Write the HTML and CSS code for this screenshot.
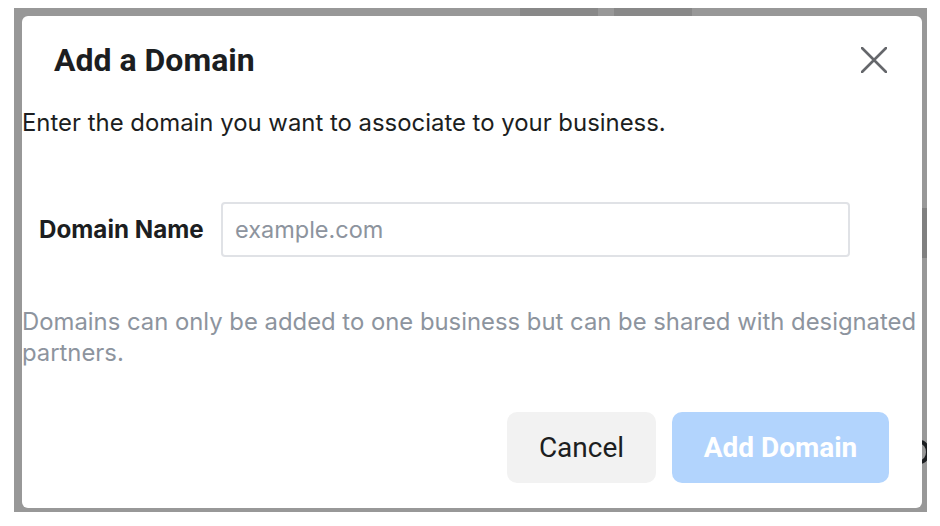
FILE: index.html
```html
<!DOCTYPE html>
<html lang="en">
<head>
  <meta charset="UTF-8" />
  <title>Add a Domain</title>
  <link rel="stylesheet" href="styles.css">
</head>
<body>

<div class="backdrop">
  <span class="under under-a"></span>
  <span class="under under-b"></span>
  <span class="under under-c"></span>
  <span class="peek"></span>

  <div class="dialog">
    <div class="dialog-header">
      <h2>Add a Domain</h2>
      <button class="btn-close" aria-label="Close">
        <svg width="26" height="26" viewBox="0 0 26 26">
          <path d="M1 1 L25 25 M25 1 L1 25" stroke="#65676b" stroke-width="2.6" stroke-linecap="round" fill="none"/>
        </svg>
      </button>
    </div>

    <p class="intro">Enter the domain you want to associate to your business.</p>

    <div class="field">
      <label for="domain">Domain Name</label>
      <input id="domain" type="text" placeholder="example.com">
    </div>

    <p class="hint">Domains can only be added to one business but can be shared with designated partners.</p>

    <div class="actions">
      <button class="btn-cancel">Cancel</button>
      <button class="btn-add" disabled>Add Domain</button>
    </div>
  </div>
</div>

</body>
</html>
```

FILE: styles.css
```css
body {
  margin: 0;
  background-color: white;
  font-family: Inter, "Liberation Sans", sans-serif;
  color: #1c1e21;
}

.backdrop {
  position: relative;
  overflow: hidden;
  margin: 8px 13px 0 14px;
  height: 504px;
  box-sizing: border-box;
  padding: 8px 5px 4px 8px;
  background-color: #989898;
}

/* bits of the page under the overlay */
.under {
  position: absolute;
  background-color: #888;
}

.under-a {
  left: 506px;
  top: 0;
  width: 78px;
  height: 8px;
}

.under-b {
  left: 600px;
  top: 0;
  width: 78px;
  height: 8px;
}

.under-c {
  right: 0;
  top: 200px;
  width: 5px;
  height: 50px;
  background-color: #808080;
}

.peek {
  position: absolute;
  left: 896px;
  top: 432px;
  width: 12px;
  height: 16px;
  border: 4px solid #1c1e21;
  border-radius: 50%;
}

.dialog {
  position: relative;
  z-index: 1;
  height: 492px;
  box-sizing: border-box;
  background-color: white;
  border-radius: 6px;
}

.dialog-header {
  display: flex;
  justify-content: space-between;
  align-items: center;
  padding: 24px 35px 0 32px;
  height: 40px;
}

.dialog-header h2 {
  margin: 0;
  font-family: Roboto, sans-serif;
  font-weight: bold;
  font-size: 32px;
  line-height: 38px;
  color: #1c1e21;
}

.btn-close {
  display: flex;
  padding: 0;
  border: none;
  background: none;
  cursor: pointer;
}

.intro {
  margin: 28px 0 0;
  font-size: 23.9px;
  line-height: 30px;
}

.field {
  display: flex;
  align-items: center;
  gap: 17px;
  margin-top: 64px;
  padding-left: 17px;
}

.field label {
  flex: 0 0 165px;
  font-size: 24.2px;
  font-weight: bold;
}

.field input {
  width: 629px;
  height: 55px;
  box-sizing: border-box;
  padding: 0 12px;
  border: 2px solid #e0e2e6;
  border-radius: 4px;
  font-family: Inter, "Liberation Sans", sans-serif;
  font-size: 23.5px;
  color: #1c1e21;
  outline: none;
}

.field input::placeholder {
  color: #8d949e;
}

.hint {
  margin: 49px 0 0;
  font-size: 23.85px;
  line-height: 31px;
  color: #8d949e;
}

.actions {
  display: flex;
  justify-content: flex-end;
  gap: 16px;
  margin-top: 44px;
  padding-right: 33px;
}

.actions button {
  height: 71px;
  border: none;
  border-radius: 10px;
  font-family: Roboto, sans-serif;
  font-size: 28px;
  cursor: pointer;
}

.btn-cancel {
  width: 149px;
  background-color: #f2f2f2;
  color: #1c1e21;
}

.btn-add {
  width: 217px;
  background-color: #b2d4fd;
  color: white;
  font-weight: bold;
}
```
